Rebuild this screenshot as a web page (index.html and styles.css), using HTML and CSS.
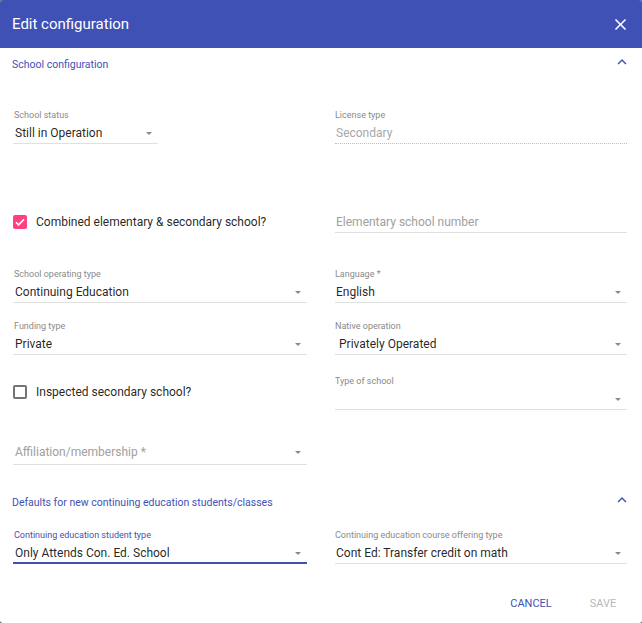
FILE: index.html
```html
<!DOCTYPE html>
<html>
<head>
<meta charset="utf-8">
<link rel="stylesheet" href="styles.css">
</head>
<body>
<div class="dialog">
  <div class="header">
    <span class="title">Edit configuration</span>
    <svg class="close" width="19" height="19" viewBox="0 0 24 24"><path fill="#fff" d="M19 6.41L17.59 5 12 10.59 6.41 5 5 6.41 10.59 12 5 17.59 6.41 19 12 13.41 17.59 19 19 17.59 13.41 12z"/></svg>
  </div>

  <div class="panel-header">
    <span>School configuration</span>
    <svg width="18" height="18" viewBox="0 0 24 24"><path fill="#3f51b5" d="M12 8l-6 6 1.41 1.41L12 10.83l4.59 4.58L18 14z"/></svg>
  </div>

  <div class="panel-body">
    <div class="row r1">
      <div class="field narrow">
        <div class="label">School status</div>
        <div class="value">Still in Operation<span class="arrow"></span></div>
      </div>
      <div class="field dotted">
        <div class="label">License type</div>
        <div class="value disabled">Secondary</div>
      </div>
    </div>

    <div class="row r2">
      <div class="check-row">
        <span class="box checked"><svg width="14" height="14" viewBox="0 0 14 14"><path d="M3 7.2l2.6 2.6L11 4.4" fill="none" stroke="#fff" stroke-width="1.6"/></svg></span>
        <span class="check-label">Combined elementary &amp; secondary school?</span>
      </div>
      <div class="field nolabel">
        <div class="value placeholder">Elementary school number</div>
      </div>
    </div>

    <div class="row r3">
      <div class="field">
        <div class="label">School operating type</div>
        <div class="value">Continuing Education<span class="arrow"></span></div>
      </div>
      <div class="field">
        <div class="label">Language *</div>
        <div class="value">English<span class="arrow"></span></div>
      </div>
    </div>

    <div class="row r4">
      <div class="field">
        <div class="label">Funding type</div>
        <div class="value">Private<span class="arrow"></span></div>
      </div>
      <div class="field">
        <div class="label">Native operation</div>
        <div class="value indent">Privately Operated<span class="arrow"></span></div>
      </div>
    </div>

    <div class="row r5">
      <div class="check-row offset">
        <span class="box"></span>
        <span class="check-label">Inspected secondary school?</span>
      </div>
      <div class="field">
        <div class="label">Type of school</div>
        <div class="value"><span class="arrow"></span></div>
      </div>
    </div>

    <div class="row r6">
      <div class="field floating">
        <div class="label"></div>
        <div class="value placeholder">Affiliation/membership *<span class="arrow"></span></div>
      </div>
      <div></div>
    </div>
  </div>

  <div class="panel-header second">
    <span>Defaults for new continuing education students/classes</span>
    <svg width="18" height="18" viewBox="0 0 24 24"><path fill="#3f51b5" d="M12 8l-6 6 1.41 1.41L12 10.83l4.59 4.58L18 14z"/></svg>
  </div>

  <div class="panel-body">
    <div class="row r7">
      <div class="field focused">
        <div class="label">Continuing education student type</div>
        <div class="value">Only Attends Con. Ed. School<span class="arrow"></span></div>
      </div>
      <div class="field">
        <div class="label">Continuing education course offering type</div>
        <div class="value">Cont Ed: Transfer credit on math<span class="arrow"></span></div>
      </div>
    </div>
  </div>

  <div class="actions">
    <button class="btn primary">CANCEL</button>
    <button class="btn disabled">SAVE</button>
  </div>
</div>
</body>
</html>
```

FILE: styles.css
```css
* { box-sizing: border-box; }
html, body { margin: 0; padding: 0; }
body {
  background: #6b6b6b;
  font-family: Roboto, "Liberation Sans", sans-serif;
}
.dialog {
  width: 642px;
  height: 623px;
  background: #fff;
  border-radius: 3px;
  overflow: hidden;
  display: flex;
  flex-direction: column;
}
.header {
  height: 48px;
  flex: none;
  background: #3f51b5;
  display: flex;
  align-items: center;
  justify-content: space-between;
  padding: 0 12px 0 12px;
}
.title {
  color: #fff;
  font-size: 15px;
}
.close { display: block; }
.panel-header {
  height: 32px;
  flex: none;
  display: flex;
  align-items: center;
  justify-content: space-between;
  padding: 0 11px 0 12px;
  color: #3f51b5;
  font-size: 10.5px;
}
.panel-header svg { display: block; margin-top: -4px; }
.panel-header.second { margin-top: 21px; }
.panel-body {
  padding: 0 15px 0 13px;
}
.row {
  display: grid;
  grid-template-columns: 294px 292px;
  column-gap: 28px;
  align-items: start;
}
.r1 { margin-top: 29px; }
.r2 { margin-top: 69px; }
.r3 { margin-top: 35px; }
.r4 { margin-top: 17px; }
.r5 { margin-top: 20px; }
.r6 { margin-top: 20px; }
.r7 { margin-top: 11px; }

.field {
  border-bottom: 1px solid #e0e0e0;
  padding-bottom: 1px;
}
.field.narrow { width: 145px; }
.field.dotted {
  border-bottom: 1px dotted #bdbdbd;
}
.label {
  height: 12px;
  line-height: 12px;
  font-size: 9px;
  color: #8a8a8a;
  padding-left: 1px;
  margin-bottom: 3px;
}
.value {
  position: relative;
  height: 18px;
  line-height: 18px;
  font-size: 12px;
  color: rgba(0,0,0,0.87);
  padding-left: 2px;
  white-space: nowrap;
}
.row > :nth-child(2) .label { padding-left: 0; }
.row > :nth-child(2) .value { padding-left: 1px; }
.row > :nth-child(2) .value.indent { padding-left: 4px; }
.value.disabled { color: #a8a8a8; }
.value.placeholder { color: #a0a0a0; }
.field.floating .label { margin-bottom: 1px; }
.field.floating { padding-bottom: 3px; }
.field.focused {
  border-bottom: 2px solid #3f51b5;
  padding-bottom: 0;
}
.field.focused .label { color: #3f51b5; }
.arrow {
  position: absolute;
  right: 6px;
  top: 8px;
  width: 0;
  height: 0;
  border-left: 3.5px solid transparent;
  border-right: 3.5px solid transparent;
  border-top: 3.5px solid #8a8a8a;
}
.check-row {
  display: flex;
  align-items: center;
  height: 18px;
  margin-top: 0;
}
.check-row.offset { margin-top: 8px; }
.box {
  width: 14px;
  height: 14px;
  border: 2px solid #757575;
  border-radius: 2px;
  margin-right: 9px;
  display: block;
  flex: none;
}
.box.checked {
  background: #ff4081;
  border: none;
}
.box svg { display: block; }
.check-label {
  font-size: 12px;
  color: rgba(0,0,0,0.87);
}
.actions {
  display: flex;
  justify-content: flex-end;
  gap: 8px;
  padding-right: 7px;
  margin-top: 21px;
}
.btn {
  min-width: 64px;
  height: 36px;
  background: none;
  border: none;
  font-family: Roboto, "Liberation Sans", sans-serif;
  font-size: 11px;
  padding: 0 8px;
}
.btn.primary { color: #3f51b5; }
.btn.disabled { color: #b8b8b8; }
```
